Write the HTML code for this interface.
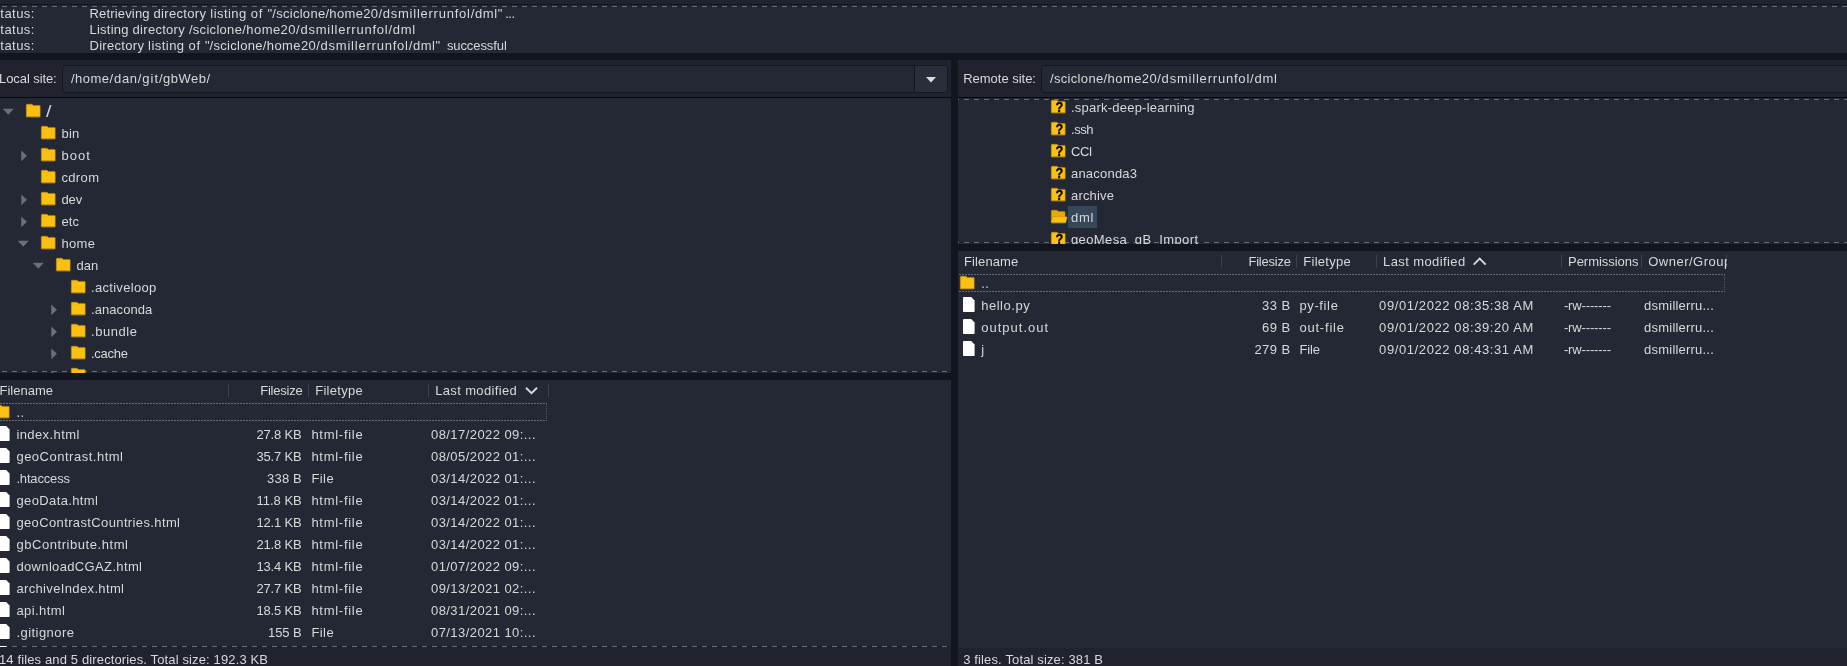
<!DOCTYPE html><html><head><meta charset="utf-8"><title>FileZilla</title><style>
html,body{margin:0;padding:0}
body{width:1847px;height:666px;overflow:hidden;position:relative;background:#242834;font-family:"Liberation Sans", sans-serif;font-size:13px;color:#d8d8d8}
.t{position:absolute;white-space:pre;line-height:22px;height:22px}
.b{position:absolute}
#ic,#tx,#tx2{position:absolute;left:0;top:0;width:1847px;height:666px;will-change:transform}
svg{position:absolute;overflow:visible}

</style></head><body>
<div class="b" style="left:0px;top:0px;width:1847px;height:4px;background:#20232e;"></div>
<div class="b" style="left:0px;top:4px;width:1847px;height:1px;background:#141620;"></div>
<div class="b" style="left:0px;top:60px;width:951px;height:37px;background:#20232e;"></div>
<div class="b" style="left:958px;top:60px;width:889px;height:37px;background:#20232e;"></div>
<div class="b" style="left:0px;top:6px;width:1847px;height:1px;background:#1b1d27"></div>
<svg style="left:0;top:0" width="1847" height="666"><line x1="0" y1="6.5" x2="1847" y2="6.5" stroke="#686c78" stroke-width="1" stroke-dasharray="5 5" stroke-dashoffset="8"/></svg>
<div class="b" style="left:958px;top:99px;width:889px;height:1px;background:#1b1d27"></div>
<svg style="left:0;top:0" width="1847" height="666"><line x1="958" y1="99.5" x2="1847" y2="99.5" stroke="#686c78" stroke-width="1" stroke-dasharray="5 5" stroke-dashoffset="4"/></svg>
<div class="b" style="left:958px;top:242px;width:889px;height:1px;background:#1b1d27"></div>
<svg style="left:0;top:0" width="1847" height="666"><line x1="958" y1="242.5" x2="1847" y2="242.5" stroke="#686c78" stroke-width="1" stroke-dasharray="5 5" stroke-dashoffset="4"/></svg>
<div class="b" style="left:0px;top:371px;width:951px;height:1px;background:#1b1d27"></div>
<svg style="left:0;top:0" width="1847" height="666"><line x1="0" y1="371.5" x2="951" y2="371.5" stroke="#686c78" stroke-width="1" stroke-dasharray="5 5" stroke-dashoffset="8"/></svg>
<div class="b" style="left:0px;top:646px;width:951px;height:1px;background:#1b1d27"></div>
<svg style="left:0;top:0" width="1847" height="666"><line x1="0" y1="646.5" x2="951" y2="646.5" stroke="#686c78" stroke-width="1" stroke-dasharray="5 5" stroke-dashoffset="8"/></svg>
<div class="b" style="left:62px;top:65px;width:886px;height:28px;background:#242734;border:1px solid #141620;border-radius:4px;box-sizing:border-box"></div>
<div class="b" style="left:914px;top:66px;width:33px;height:26px;background:#2a2d3b;border-left:1px solid #141620;border-radius:0 3px 3px 0;box-sizing:border-box"></div>
<svg style="left:0;top:0" width="1847" height="666"><path d="M926 77h10l-5 5.5z" fill="#deddda"/></svg>
<div class="b" style="left:1041px;top:65px;width:830px;height:28px;background:#242734;border:1px solid #141620;border-radius:4px;box-sizing:border-box"></div>
<div id="ic">
<svg style="left:25.55px;top:104.30px" width="15" height="14" viewBox="0 0 15 14"><path d="M0.3 1Q0.3 0.2 1.1 0.2H5.7Q6.3 0.2 6.7 0.8L7.1 1.4H13.5Q14.2 1.4 14.2 2.1V12.4Q14.2 13.1 13.5 13.1H1Q0.3 13.1 0.3 12.4Z" fill="#fcc012" stroke="#b58a10" stroke-width="0.5"/><path d="M0.6 12.9H13.9" stroke="#8a6508" stroke-width="0.6" fill="none"/><path d="M0.8 2.2H6.4" stroke="#e9ae0c" stroke-width="0.6" fill="none"/></svg>
<svg style="left:0;top:0" width="1847" height="666"><path d="M2.75 108.8h11l-5.5 6z" fill="#6b6e7c"/></svg>
<svg style="left:40.55px;top:126.30px" width="15" height="14" viewBox="0 0 15 14"><path d="M0.3 1Q0.3 0.2 1.1 0.2H5.7Q6.3 0.2 6.7 0.8L7.1 1.4H13.5Q14.2 1.4 14.2 2.1V12.4Q14.2 13.1 13.5 13.1H1Q0.3 13.1 0.3 12.4Z" fill="#fcc012" stroke="#b58a10" stroke-width="0.5"/><path d="M0.6 12.9H13.9" stroke="#8a6508" stroke-width="0.6" fill="none"/><path d="M0.8 2.2H6.4" stroke="#e9ae0c" stroke-width="0.6" fill="none"/></svg>
<svg style="left:40.55px;top:148.30px" width="15" height="14" viewBox="0 0 15 14"><path d="M0.3 1Q0.3 0.2 1.1 0.2H5.7Q6.3 0.2 6.7 0.8L7.1 1.4H13.5Q14.2 1.4 14.2 2.1V12.4Q14.2 13.1 13.5 13.1H1Q0.3 13.1 0.3 12.4Z" fill="#fcc012" stroke="#b58a10" stroke-width="0.5"/><path d="M0.6 12.9H13.9" stroke="#8a6508" stroke-width="0.6" fill="none"/><path d="M0.8 2.2H6.4" stroke="#e9ae0c" stroke-width="0.6" fill="none"/></svg>
<svg style="left:0;top:0" width="1847" height="666"><path d="M21.249999999999996 150.4v10.8l5.7 -5.4z" fill="#6b6e7c"/></svg>
<svg style="left:40.55px;top:170.30px" width="15" height="14" viewBox="0 0 15 14"><path d="M0.3 1Q0.3 0.2 1.1 0.2H5.7Q6.3 0.2 6.7 0.8L7.1 1.4H13.5Q14.2 1.4 14.2 2.1V12.4Q14.2 13.1 13.5 13.1H1Q0.3 13.1 0.3 12.4Z" fill="#fcc012" stroke="#b58a10" stroke-width="0.5"/><path d="M0.6 12.9H13.9" stroke="#8a6508" stroke-width="0.6" fill="none"/><path d="M0.8 2.2H6.4" stroke="#e9ae0c" stroke-width="0.6" fill="none"/></svg>
<svg style="left:40.55px;top:192.30px" width="15" height="14" viewBox="0 0 15 14"><path d="M0.3 1Q0.3 0.2 1.1 0.2H5.7Q6.3 0.2 6.7 0.8L7.1 1.4H13.5Q14.2 1.4 14.2 2.1V12.4Q14.2 13.1 13.5 13.1H1Q0.3 13.1 0.3 12.4Z" fill="#fcc012" stroke="#b58a10" stroke-width="0.5"/><path d="M0.6 12.9H13.9" stroke="#8a6508" stroke-width="0.6" fill="none"/><path d="M0.8 2.2H6.4" stroke="#e9ae0c" stroke-width="0.6" fill="none"/></svg>
<svg style="left:0;top:0" width="1847" height="666"><path d="M21.249999999999996 194.4v10.8l5.7 -5.4z" fill="#6b6e7c"/></svg>
<svg style="left:40.55px;top:214.30px" width="15" height="14" viewBox="0 0 15 14"><path d="M0.3 1Q0.3 0.2 1.1 0.2H5.7Q6.3 0.2 6.7 0.8L7.1 1.4H13.5Q14.2 1.4 14.2 2.1V12.4Q14.2 13.1 13.5 13.1H1Q0.3 13.1 0.3 12.4Z" fill="#fcc012" stroke="#b58a10" stroke-width="0.5"/><path d="M0.6 12.9H13.9" stroke="#8a6508" stroke-width="0.6" fill="none"/><path d="M0.8 2.2H6.4" stroke="#e9ae0c" stroke-width="0.6" fill="none"/></svg>
<svg style="left:0;top:0" width="1847" height="666"><path d="M21.249999999999996 216.4v10.8l5.7 -5.4z" fill="#6b6e7c"/></svg>
<svg style="left:40.55px;top:236.30px" width="15" height="14" viewBox="0 0 15 14"><path d="M0.3 1Q0.3 0.2 1.1 0.2H5.7Q6.3 0.2 6.7 0.8L7.1 1.4H13.5Q14.2 1.4 14.2 2.1V12.4Q14.2 13.1 13.5 13.1H1Q0.3 13.1 0.3 12.4Z" fill="#fcc012" stroke="#b58a10" stroke-width="0.5"/><path d="M0.6 12.9H13.9" stroke="#8a6508" stroke-width="0.6" fill="none"/><path d="M0.8 2.2H6.4" stroke="#e9ae0c" stroke-width="0.6" fill="none"/></svg>
<svg style="left:0;top:0" width="1847" height="666"><path d="M17.749999999999996 240.8h11l-5.5 6z" fill="#6b6e7c"/></svg>
<svg style="left:55.55px;top:258.30px" width="15" height="14" viewBox="0 0 15 14"><path d="M0.3 1Q0.3 0.2 1.1 0.2H5.7Q6.3 0.2 6.7 0.8L7.1 1.4H13.5Q14.2 1.4 14.2 2.1V12.4Q14.2 13.1 13.5 13.1H1Q0.3 13.1 0.3 12.4Z" fill="#fcc012" stroke="#b58a10" stroke-width="0.5"/><path d="M0.6 12.9H13.9" stroke="#8a6508" stroke-width="0.6" fill="none"/><path d="M0.8 2.2H6.4" stroke="#e9ae0c" stroke-width="0.6" fill="none"/></svg>
<svg style="left:0;top:0" width="1847" height="666"><path d="M32.75 262.8h11l-5.5 6z" fill="#6b6e7c"/></svg>
<svg style="left:70.55px;top:280.30px" width="15" height="14" viewBox="0 0 15 14"><path d="M0.3 1Q0.3 0.2 1.1 0.2H5.7Q6.3 0.2 6.7 0.8L7.1 1.4H13.5Q14.2 1.4 14.2 2.1V12.4Q14.2 13.1 13.5 13.1H1Q0.3 13.1 0.3 12.4Z" fill="#fcc012" stroke="#b58a10" stroke-width="0.5"/><path d="M0.6 12.9H13.9" stroke="#8a6508" stroke-width="0.6" fill="none"/><path d="M0.8 2.2H6.4" stroke="#e9ae0c" stroke-width="0.6" fill="none"/></svg>
<svg style="left:70.55px;top:302.30px" width="15" height="14" viewBox="0 0 15 14"><path d="M0.3 1Q0.3 0.2 1.1 0.2H5.7Q6.3 0.2 6.7 0.8L7.1 1.4H13.5Q14.2 1.4 14.2 2.1V12.4Q14.2 13.1 13.5 13.1H1Q0.3 13.1 0.3 12.4Z" fill="#fcc012" stroke="#b58a10" stroke-width="0.5"/><path d="M0.6 12.9H13.9" stroke="#8a6508" stroke-width="0.6" fill="none"/><path d="M0.8 2.2H6.4" stroke="#e9ae0c" stroke-width="0.6" fill="none"/></svg>
<svg style="left:0;top:0" width="1847" height="666"><path d="M51.25 304.4v10.8l5.7 -5.4z" fill="#6b6e7c"/></svg>
<svg style="left:70.55px;top:324.30px" width="15" height="14" viewBox="0 0 15 14"><path d="M0.3 1Q0.3 0.2 1.1 0.2H5.7Q6.3 0.2 6.7 0.8L7.1 1.4H13.5Q14.2 1.4 14.2 2.1V12.4Q14.2 13.1 13.5 13.1H1Q0.3 13.1 0.3 12.4Z" fill="#fcc012" stroke="#b58a10" stroke-width="0.5"/><path d="M0.6 12.9H13.9" stroke="#8a6508" stroke-width="0.6" fill="none"/><path d="M0.8 2.2H6.4" stroke="#e9ae0c" stroke-width="0.6" fill="none"/></svg>
<svg style="left:0;top:0" width="1847" height="666"><path d="M51.25 326.4v10.8l5.7 -5.4z" fill="#6b6e7c"/></svg>
<svg style="left:70.55px;top:346.30px" width="15" height="14" viewBox="0 0 15 14"><path d="M0.3 1Q0.3 0.2 1.1 0.2H5.7Q6.3 0.2 6.7 0.8L7.1 1.4H13.5Q14.2 1.4 14.2 2.1V12.4Q14.2 13.1 13.5 13.1H1Q0.3 13.1 0.3 12.4Z" fill="#fcc012" stroke="#b58a10" stroke-width="0.5"/><path d="M0.6 12.9H13.9" stroke="#8a6508" stroke-width="0.6" fill="none"/><path d="M0.8 2.2H6.4" stroke="#e9ae0c" stroke-width="0.6" fill="none"/></svg>
<svg style="left:0;top:0" width="1847" height="666"><path d="M51.25 348.4v10.8l5.7 -5.4z" fill="#6b6e7c"/></svg>
<div class="b" style="left:0;top:0;width:951px;height:373px;overflow:hidden">
<svg style="left:71.10px;top:368.30px" width="15" height="14" viewBox="0 0 15 14"><path d="M0.3 1Q0.3 0.2 1.1 0.2H5.7Q6.3 0.2 6.7 0.8L7.1 1.4H13.5Q14.2 1.4 14.2 2.1V12.4Q14.2 13.1 13.5 13.1H1Q0.3 13.1 0.3 12.4Z" fill="#fcc012" stroke="#b58a10" stroke-width="0.5"/><path d="M0.6 12.9H13.9" stroke="#8a6508" stroke-width="0.6" fill="none"/><path d="M0.8 2.2H6.4" stroke="#e9ae0c" stroke-width="0.6" fill="none"/></svg>
<svg style="left:0;top:0" width="1847" height="666"><path d="M51.3 370.4v10.8l5.7 -5.4z" fill="#6b6e7c"/></svg>
</div>
<svg style="left:1050.70px;top:100.30px" width="15" height="14" viewBox="0 0 15 14"><path d="M0.3 1Q0.3 0.2 1.1 0.2H5.7Q6.3 0.2 6.7 0.8L7.1 1.4H13.5Q14.2 1.4 14.2 2.1V12.4Q14.2 13.1 13.5 13.1H1Q0.3 13.1 0.3 12.4Z" fill="#fcc012" stroke="#b58a10" stroke-width="0.5"/><path d="M0.6 12.9H13.9" stroke="#8a6508" stroke-width="0.6" fill="none"/><text x="8.35" y="12.2" text-anchor="middle" stroke="#080808" stroke-width="0.35" font-family="Liberation Sans, sans-serif" font-weight="bold" font-size="14.2" fill="#080808" transform="translate(8.35 0) scale(0.9 1) translate(-8.35 0)">?</text></svg>
<svg style="left:1050.70px;top:122.30px" width="15" height="14" viewBox="0 0 15 14"><path d="M0.3 1Q0.3 0.2 1.1 0.2H5.7Q6.3 0.2 6.7 0.8L7.1 1.4H13.5Q14.2 1.4 14.2 2.1V12.4Q14.2 13.1 13.5 13.1H1Q0.3 13.1 0.3 12.4Z" fill="#fcc012" stroke="#b58a10" stroke-width="0.5"/><path d="M0.6 12.9H13.9" stroke="#8a6508" stroke-width="0.6" fill="none"/><text x="8.35" y="12.2" text-anchor="middle" stroke="#080808" stroke-width="0.35" font-family="Liberation Sans, sans-serif" font-weight="bold" font-size="14.2" fill="#080808" transform="translate(8.35 0) scale(0.9 1) translate(-8.35 0)">?</text></svg>
<svg style="left:1050.70px;top:144.30px" width="15" height="14" viewBox="0 0 15 14"><path d="M0.3 1Q0.3 0.2 1.1 0.2H5.7Q6.3 0.2 6.7 0.8L7.1 1.4H13.5Q14.2 1.4 14.2 2.1V12.4Q14.2 13.1 13.5 13.1H1Q0.3 13.1 0.3 12.4Z" fill="#fcc012" stroke="#b58a10" stroke-width="0.5"/><path d="M0.6 12.9H13.9" stroke="#8a6508" stroke-width="0.6" fill="none"/><text x="8.35" y="12.2" text-anchor="middle" stroke="#080808" stroke-width="0.35" font-family="Liberation Sans, sans-serif" font-weight="bold" font-size="14.2" fill="#080808" transform="translate(8.35 0) scale(0.9 1) translate(-8.35 0)">?</text></svg>
<svg style="left:1050.70px;top:166.30px" width="15" height="14" viewBox="0 0 15 14"><path d="M0.3 1Q0.3 0.2 1.1 0.2H5.7Q6.3 0.2 6.7 0.8L7.1 1.4H13.5Q14.2 1.4 14.2 2.1V12.4Q14.2 13.1 13.5 13.1H1Q0.3 13.1 0.3 12.4Z" fill="#fcc012" stroke="#b58a10" stroke-width="0.5"/><path d="M0.6 12.9H13.9" stroke="#8a6508" stroke-width="0.6" fill="none"/><text x="8.35" y="12.2" text-anchor="middle" stroke="#080808" stroke-width="0.35" font-family="Liberation Sans, sans-serif" font-weight="bold" font-size="14.2" fill="#080808" transform="translate(8.35 0) scale(0.9 1) translate(-8.35 0)">?</text></svg>
<svg style="left:1050.70px;top:188.30px" width="15" height="14" viewBox="0 0 15 14"><path d="M0.3 1Q0.3 0.2 1.1 0.2H5.7Q6.3 0.2 6.7 0.8L7.1 1.4H13.5Q14.2 1.4 14.2 2.1V12.4Q14.2 13.1 13.5 13.1H1Q0.3 13.1 0.3 12.4Z" fill="#fcc012" stroke="#b58a10" stroke-width="0.5"/><path d="M0.6 12.9H13.9" stroke="#8a6508" stroke-width="0.6" fill="none"/><text x="8.35" y="12.2" text-anchor="middle" stroke="#080808" stroke-width="0.35" font-family="Liberation Sans, sans-serif" font-weight="bold" font-size="14.2" fill="#080808" transform="translate(8.35 0) scale(0.9 1) translate(-8.35 0)">?</text></svg>
<div class="b" style="left:1068px;top:206px;width:29px;height:22px;background:#36475a;"></div>
<svg style="left:1050.70px;top:210.30px" width="17" height="14" viewBox="0 0 17 14"><path d="M0.3 1Q0.3 0.2 1.1 0.2H5.7Q6.3 0.2 6.7 0.8L7.1 1.4H13.3Q14 1.4 14 2.1V12H0.3Z" fill="#e6a80c" stroke="#b58a10" stroke-width="0.5"/><path d="M2.2 6.7H15.6Q16.3 6.7 16.1 7.4L14.9 12.4Q14.7 13.1 14 13.1H1Q0.3 13.1 0.3 12.4V11.5L1.5 7.4Q1.7 6.7 2.4 6.7Z" fill="#fcc012" stroke="#b58a10" stroke-width="0.4"/><path d="M0.6 12.9H14.3" stroke="#8a6508" stroke-width="0.6" fill="none"/></svg>
<svg style="left:1050.70px;top:232.30px" width="15" height="14" viewBox="0 0 15 14"><path d="M0.3 1Q0.3 0.2 1.1 0.2H5.7Q6.3 0.2 6.7 0.8L7.1 1.4H13.5Q14.2 1.4 14.2 2.1V12.4Q14.2 13.1 13.5 13.1H1Q0.3 13.1 0.3 12.4Z" fill="#fcc012" stroke="#b58a10" stroke-width="0.5"/><path d="M0.6 12.9H13.9" stroke="#8a6508" stroke-width="0.6" fill="none"/><text x="8.35" y="12.2" text-anchor="middle" stroke="#080808" stroke-width="0.35" font-family="Liberation Sans, sans-serif" font-weight="bold" font-size="14.2" fill="#080808" transform="translate(8.35 0) scale(0.9 1) translate(-8.35 0)">?</text></svg>
<div class="b" style="left:228px;top:384px;width:1px;height:13px;background:#3d404d;"></div>
<div class="b" style="left:308px;top:384px;width:1px;height:13px;background:#3d404d;"></div>
<div class="b" style="left:428px;top:384px;width:1px;height:13px;background:#3d404d;"></div>
<div class="b" style="left:548px;top:384px;width:1px;height:13px;background:#3d404d;"></div>
<div class="b" style="left:1221px;top:255px;width:1px;height:13px;background:#3d404d;"></div>
<div class="b" style="left:1296px;top:255px;width:1px;height:13px;background:#3d404d;"></div>
<div class="b" style="left:1376px;top:255px;width:1px;height:13px;background:#3d404d;"></div>
<div class="b" style="left:1561px;top:255px;width:1px;height:13px;background:#3d404d;"></div>
<div class="b" style="left:1641px;top:255px;width:1px;height:13px;background:#3d404d;"></div>
<div class="b" style="left:1726px;top:255px;width:1px;height:13px;background:#3d404d;"></div>
<svg style="left:0;top:0" width="1847" height="666"><path d="M526 387.8l5.5 5.3l5.5 -5.3" fill="none" stroke="#d8d8d8" stroke-width="1.9"/><path d="M1473.7 264.6l6 -6l6 6" fill="none" stroke="#d8d8d8" stroke-width="1.9"/></svg>
<svg style="left:-5.30px;top:404.90px" width="15" height="14" viewBox="0 0 15 14"><path d="M0.3 1Q0.3 0.2 1.1 0.2H5.7Q6.3 0.2 6.7 0.8L7.1 1.4H13.5Q14.2 1.4 14.2 2.1V12.4Q14.2 13.1 13.5 13.1H1Q0.3 13.1 0.3 12.4Z" fill="#fcc012" stroke="#b58a10" stroke-width="0.5"/><path d="M0.6 12.9H13.9" stroke="#8a6508" stroke-width="0.6" fill="none"/><path d="M0.8 2.2H6.4" stroke="#e9ae0c" stroke-width="0.6" fill="none"/></svg>
<svg style="left:-2.3px;top:425.8px" width="12" height="15" viewBox="0 0 12 15"><path d="M0.8 0H8.2L11.6 3.4V14.3Q11.6 15.1 10.8 15.1H0.8Q0 15.1 0 14.3V0.8Q0 0 0.8 0Z" fill="#ffffff"/></svg>
<svg style="left:-2.3px;top:447.8px" width="12" height="15" viewBox="0 0 12 15"><path d="M0.8 0H8.2L11.6 3.4V14.3Q11.6 15.1 10.8 15.1H0.8Q0 15.1 0 14.3V0.8Q0 0 0.8 0Z" fill="#ffffff"/></svg>
<svg style="left:-2.3px;top:469.8px" width="12" height="15" viewBox="0 0 12 15"><path d="M0.8 0H8.2L11.6 3.4V14.3Q11.6 15.1 10.8 15.1H0.8Q0 15.1 0 14.3V0.8Q0 0 0.8 0Z" fill="#ffffff"/></svg>
<svg style="left:-2.3px;top:491.8px" width="12" height="15" viewBox="0 0 12 15"><path d="M0.8 0H8.2L11.6 3.4V14.3Q11.6 15.1 10.8 15.1H0.8Q0 15.1 0 14.3V0.8Q0 0 0.8 0Z" fill="#ffffff"/></svg>
<svg style="left:-2.3px;top:513.8px" width="12" height="15" viewBox="0 0 12 15"><path d="M0.8 0H8.2L11.6 3.4V14.3Q11.6 15.1 10.8 15.1H0.8Q0 15.1 0 14.3V0.8Q0 0 0.8 0Z" fill="#ffffff"/></svg>
<svg style="left:-2.3px;top:535.8px" width="12" height="15" viewBox="0 0 12 15"><path d="M0.8 0H8.2L11.6 3.4V14.3Q11.6 15.1 10.8 15.1H0.8Q0 15.1 0 14.3V0.8Q0 0 0.8 0Z" fill="#ffffff"/></svg>
<svg style="left:-2.3px;top:557.8px" width="12" height="15" viewBox="0 0 12 15"><path d="M0.8 0H8.2L11.6 3.4V14.3Q11.6 15.1 10.8 15.1H0.8Q0 15.1 0 14.3V0.8Q0 0 0.8 0Z" fill="#ffffff"/></svg>
<svg style="left:-2.3px;top:579.8px" width="12" height="15" viewBox="0 0 12 15"><path d="M0.8 0H8.2L11.6 3.4V14.3Q11.6 15.1 10.8 15.1H0.8Q0 15.1 0 14.3V0.8Q0 0 0.8 0Z" fill="#ffffff"/></svg>
<svg style="left:-2.3px;top:601.8px" width="12" height="15" viewBox="0 0 12 15"><path d="M0.8 0H8.2L11.6 3.4V14.3Q11.6 15.1 10.8 15.1H0.8Q0 15.1 0 14.3V0.8Q0 0 0.8 0Z" fill="#ffffff"/></svg>
<svg style="left:-2.3px;top:623.8px" width="12" height="15" viewBox="0 0 12 15"><path d="M0.8 0H8.2L11.6 3.4V14.3Q11.6 15.1 10.8 15.1H0.8Q0 15.1 0 14.3V0.8Q0 0 0.8 0Z" fill="#ffffff"/></svg>
<svg style="left:-2.3px;top:645.7px" width="12" height="15" viewBox="0 0 12 15"><path d="M0.8 0H8.2L11.6 3.4V14.3Q11.6 15.1 10.8 15.1H0.8Q0 15.1 0 14.3V0.8Q0 0 0.8 0Z" fill="#ffffff"/></svg>
<svg style="left:0;top:0" width="1847" height="666"><path d="M-3 403.5H547M-3 420.5H547" fill="none" stroke="#666a76" stroke-width="1" stroke-dasharray="2 1"/><path d="M546.5 404V420" fill="none" stroke="#555966" stroke-width="1" stroke-dasharray="1 1"/></svg>
<svg style="left:0;top:0" width="1847" height="666"><path d="M959 274.5H1725M959 291.5H1725" fill="none" stroke="#666a76" stroke-width="1" stroke-dasharray="2 1"/><path d="M1724.5 275V291" fill="none" stroke="#555966" stroke-width="1" stroke-dasharray="1 1"/></svg>
<svg style="left:959.80px;top:275.90px" width="15" height="14" viewBox="0 0 15 14"><path d="M0.3 1Q0.3 0.2 1.1 0.2H5.7Q6.3 0.2 6.7 0.8L7.1 1.4H13.5Q14.2 1.4 14.2 2.1V12.4Q14.2 13.1 13.5 13.1H1Q0.3 13.1 0.3 12.4Z" fill="#fcc012" stroke="#b58a10" stroke-width="0.5"/><path d="M0.6 12.9H13.9" stroke="#8a6508" stroke-width="0.6" fill="none"/><path d="M0.8 2.2H6.4" stroke="#e9ae0c" stroke-width="0.6" fill="none"/></svg>
<svg style="left:962.5px;top:296.8px" width="12" height="15" viewBox="0 0 12 15"><path d="M0.8 0H8.2L11.6 3.4V14.3Q11.6 15.1 10.8 15.1H0.8Q0 15.1 0 14.3V0.8Q0 0 0.8 0Z" fill="#ffffff"/></svg>
<svg style="left:962.5px;top:318.8px" width="12" height="15" viewBox="0 0 12 15"><path d="M0.8 0H8.2L11.6 3.4V14.3Q11.6 15.1 10.8 15.1H0.8Q0 15.1 0 14.3V0.8Q0 0 0.8 0Z" fill="#ffffff"/></svg>
<svg style="left:962.5px;top:340.8px" width="12" height="15" viewBox="0 0 12 15"><path d="M0.8 0H8.2L11.6 3.4V14.3Q11.6 15.1 10.8 15.1H0.8Q0 15.1 0 14.3V0.8Q0 0 0.8 0Z" fill="#ffffff"/></svg>
</div>
<div id="tx">
<span class="t" style="left:45.6px;top:101.4px;font-size:17px;transform:scaleX(1.15);transform-origin:0 0;letter-spacing:0">/</span>
<span class="t" style="left:1648.2px;top:250.60px;width:78.5px;overflow:hidden;letter-spacing:0.5px">Owner/Group</span>
<span class="t" style="left:-8.77px;top:3.20px;letter-spacing:0.450px">Status:</span>
<span class="t" style="left:-8.77px;top:19.00px;letter-spacing:0.450px">Status:</span>
<span class="t" style="left:-8.77px;top:34.80px;letter-spacing:0.450px">Status:</span>
<span class="t" style="left:89.50px;top:3.20px;letter-spacing:0.169px">Retrieving </span>
<span class="t" style="left:153.50px;top:3.20px;letter-spacing:0.333px">directory </span>
<span class="t" style="left:210.30px;top:3.20px;letter-spacing:0.455px">listing </span>
<span class="t" style="left:250.80px;top:3.20px;letter-spacing:0.744px">of </span>
<span class="t" style="left:267.50px;top:3.20px;letter-spacing:0.175px">&quot;</span>
<span class="t" style="left:272.30px;top:3.20px;letter-spacing:0.280px">/sciclone</span>
<span class="t" style="left:325.40px;top:3.20px;letter-spacing:0.344px">/home20</span>
<span class="t" style="left:378.40px;top:3.20px;letter-spacing:0.759px">/dsmillerrunfol</span>
<span class="t" style="left:470.70px;top:3.20px;letter-spacing:0.609px">/dml</span>
<span class="t" style="left:497.70px;top:3.20px;letter-spacing:2.875px">&quot;</span>
<span class="t" style="left:505.20px;top:3.20px;letter-spacing:-0.500px">...</span>
<span class="t" style="left:89.50px;top:19.00px;letter-spacing:0.237px">Listing </span>
<span class="t" style="left:132.60px;top:19.00px;letter-spacing:0.283px">directory </span>
<span class="t" style="left:188.90px;top:19.00px;letter-spacing:0.302px">/sciclone</span>
<span class="t" style="left:242.20px;top:19.00px;letter-spacing:0.458px">/home20</span>
<span class="t" style="left:296.00px;top:19.00px;letter-spacing:0.772px">/dsmillerrunfol</span>
<span class="t" style="left:388.50px;top:19.00px;letter-spacing:0.679px">/dml</span>
<span class="t" style="left:89.50px;top:34.80px;letter-spacing:0.297px">Directory </span>
<span class="t" style="left:148.10px;top:34.80px;letter-spacing:0.455px">listing </span>
<span class="t" style="left:188.60px;top:34.80px;letter-spacing:0.644px">of </span>
<span class="t" style="left:205.00px;top:34.80px;letter-spacing:-0.125px">&quot;</span>
<span class="t" style="left:209.50px;top:34.80px;letter-spacing:0.302px">/sciclone</span>
<span class="t" style="left:262.80px;top:34.80px;letter-spacing:0.401px">/home20</span>
<span class="t" style="left:316.20px;top:34.80px;letter-spacing:0.772px">/dsmillerrunfol</span>
<span class="t" style="left:408.70px;top:34.80px;letter-spacing:0.584px">/dml</span>
<span class="t" style="left:435.60px;top:34.80px;letter-spacing:1.533px">&quot; </span>
<span class="t" style="left:446.90px;top:34.80px;letter-spacing:-0.089px">successful</span>
<span class="t" style="left:-1.00px;top:68.00px;letter-spacing:-0.067px">Local </span>
<span class="t" style="left:33.30px;top:68.00px;letter-spacing:-0.136px">site:</span>
<span class="t" style="left:70.90px;top:68.00px;letter-spacing:0.512px">/home</span>
<span class="t" style="left:109.60px;top:68.00px;letter-spacing:0.722px">/dan</span>
<span class="t" style="left:137.80px;top:68.00px;letter-spacing:0.964px">/git</span>
<span class="t" style="left:159.00px;top:68.00px;letter-spacing:0.470px">/gbWeb</span>
<span class="t" style="left:206.40px;top:68.00px;letter-spacing:0.450px">/</span>
<span class="t" style="left:963.20px;top:68.00px;letter-spacing:-0.017px">Remote site:</span>
<span class="t" style="left:1050.00px;top:68.00px;letter-spacing:0.325px">/sciclone</span>
<span class="t" style="left:1103.50px;top:68.00px;letter-spacing:0.444px">/home20</span>
<span class="t" style="left:1157.20px;top:68.00px;letter-spacing:0.799px">/dsmillerrunfol</span>
<span class="t" style="left:1250.10px;top:68.00px;letter-spacing:0.779px">/dml</span>
<span class="t" style="left:61.40px;top:122.50px;letter-spacing:0.270px">bin</span>
<span class="t" style="left:61.40px;top:144.50px;letter-spacing:1.029px">boot</span>
<span class="t" style="left:61.40px;top:166.50px;letter-spacing:0.369px">cdrom</span>
<span class="t" style="left:61.40px;top:188.50px;letter-spacing:-0.034px">dev</span>
<span class="t" style="left:61.40px;top:210.50px;letter-spacing:0.128px">etc</span>
<span class="t" style="left:61.40px;top:232.50px;letter-spacing:0.356px">home</span>
<span class="t" style="left:76.40px;top:254.50px;letter-spacing:0.048px">dan</span>
<span class="t" style="left:91.00px;top:276.50px;letter-spacing:0.304px">.activeloop</span>
<span class="t" style="left:91.00px;top:298.50px;letter-spacing:0.071px">.anaconda</span>
<span class="t" style="left:91.00px;top:320.50px;letter-spacing:0.557px">.bundle</span>
<span class="t" style="left:91.00px;top:342.50px;letter-spacing:-0.263px">.cache</span>
<span class="t" style="left:1071.00px;top:96.50px;letter-spacing:0.225px">.spark-deep-learning</span>
<span class="t" style="left:1071.00px;top:118.50px;letter-spacing:-0.448px">.ssh</span>
<span class="t" style="left:1071.00px;top:140.50px;letter-spacing:-0.500px">CCI</span>
<span class="t" style="left:1071.00px;top:162.50px;letter-spacing:0.207px">anaconda3</span>
<span class="t" style="left:1071.00px;top:184.50px;letter-spacing:0.180px">archive</span>
<span class="t" style="left:1071.00px;top:206.50px;letter-spacing:0.773px">dml</span>
<span class="t" style="left:1071.00px;top:228.50px;letter-spacing:0.395px">geoMesa_gB_Import</span>
<span class="t" style="left:-0.50px;top:379.90px;letter-spacing:0.004px">Filename</span>
<span class="t" style="left:260.20px;top:379.90px;letter-spacing:-0.225px">Filesize</span>
<span class="t" style="left:315.20px;top:379.90px;letter-spacing:0.281px">Filetype</span>
<span class="t" style="left:435.20px;top:379.90px;letter-spacing:0.356px">Last modified</span>
<span class="t" style="left:16.40px;top:401.50px;letter-spacing:0.450px">..</span>
<span class="t" style="left:16.40px;top:423.50px;letter-spacing:0.406px">index.html</span>
<span class="t" style="left:256.40px;top:423.50px;letter-spacing:-0.144px">27.8 KB</span>
<span class="t" style="left:311.40px;top:423.50px;letter-spacing:0.723px">html-file</span>
<span class="t" style="left:431.00px;top:423.50px;letter-spacing:0.432px">08/17/2022 09:...</span>
<span class="t" style="left:16.40px;top:445.50px;letter-spacing:0.507px">geoContrast.html</span>
<span class="t" style="left:256.40px;top:445.50px;letter-spacing:-0.144px">35.7 KB</span>
<span class="t" style="left:311.40px;top:445.50px;letter-spacing:0.723px">html-file</span>
<span class="t" style="left:431.00px;top:445.50px;letter-spacing:0.432px">08/05/2022 01:...</span>
<span class="t" style="left:16.40px;top:467.50px;letter-spacing:-0.165px">.htaccess</span>
<span class="t" style="left:267.10px;top:467.50px;letter-spacing:0.179px">338 B</span>
<span class="t" style="left:311.40px;top:467.50px;letter-spacing:0.450px">File</span>
<span class="t" style="left:431.00px;top:467.50px;letter-spacing:0.432px">03/14/2022 01:...</span>
<span class="t" style="left:16.40px;top:489.50px;letter-spacing:0.388px">geoData.html</span>
<span class="t" style="left:256.40px;top:489.50px;letter-spacing:0.017px">11.8 KB</span>
<span class="t" style="left:311.40px;top:489.50px;letter-spacing:0.723px">html-file</span>
<span class="t" style="left:431.00px;top:489.50px;letter-spacing:0.432px">03/14/2022 01:...</span>
<span class="t" style="left:16.40px;top:511.50px;letter-spacing:0.373px">geoContrastCountries.html</span>
<span class="t" style="left:256.40px;top:511.50px;letter-spacing:-0.144px">12.1 KB</span>
<span class="t" style="left:311.40px;top:511.50px;letter-spacing:0.723px">html-file</span>
<span class="t" style="left:431.00px;top:511.50px;letter-spacing:0.432px">03/14/2022 01:...</span>
<span class="t" style="left:16.40px;top:533.50px;letter-spacing:0.561px">gbContribute.html</span>
<span class="t" style="left:256.40px;top:533.50px;letter-spacing:-0.144px">21.8 KB</span>
<span class="t" style="left:311.40px;top:533.50px;letter-spacing:0.723px">html-file</span>
<span class="t" style="left:431.00px;top:533.50px;letter-spacing:0.432px">03/14/2022 01:...</span>
<span class="t" style="left:16.40px;top:555.50px;letter-spacing:0.353px">downloadCGAZ.html</span>
<span class="t" style="left:256.40px;top:555.50px;letter-spacing:-0.144px">13.4 KB</span>
<span class="t" style="left:311.40px;top:555.50px;letter-spacing:0.723px">html-file</span>
<span class="t" style="left:431.00px;top:555.50px;letter-spacing:0.432px">01/07/2022 09:...</span>
<span class="t" style="left:16.40px;top:577.50px;letter-spacing:0.357px">archiveIndex.html</span>
<span class="t" style="left:256.40px;top:577.50px;letter-spacing:-0.144px">27.7 KB</span>
<span class="t" style="left:311.40px;top:577.50px;letter-spacing:0.723px">html-file</span>
<span class="t" style="left:431.00px;top:577.50px;letter-spacing:0.432px">09/13/2021 02:...</span>
<span class="t" style="left:16.40px;top:599.50px;letter-spacing:0.438px">api.html</span>
<span class="t" style="left:256.40px;top:599.50px;letter-spacing:-0.144px">18.5 KB</span>
<span class="t" style="left:311.40px;top:599.50px;letter-spacing:0.723px">html-file</span>
<span class="t" style="left:431.00px;top:599.50px;letter-spacing:0.432px">08/31/2021 09:...</span>
<span class="t" style="left:16.40px;top:621.50px;letter-spacing:0.457px">.gitignore</span>
<span class="t" style="left:268.00px;top:621.50px;letter-spacing:-0.046px">155 B</span>
<span class="t" style="left:311.40px;top:621.50px;letter-spacing:0.450px">File</span>
<span class="t" style="left:431.00px;top:621.50px;letter-spacing:0.432px">07/13/2021 10:...</span>
<span class="t" style="left:964.10px;top:250.60px;letter-spacing:0.090px">Filename</span>
<span class="t" style="left:1248.50px;top:250.60px;letter-spacing:-0.240px">Filesize</span>
<span class="t" style="left:1303.30px;top:250.60px;letter-spacing:0.281px">Filetype</span>
<span class="t" style="left:1383.10px;top:250.60px;letter-spacing:0.398px">Last modified</span>
<span class="t" style="left:1568.00px;top:250.60px;letter-spacing:-0.030px">Permissions</span>
<span class="t" style="left:981.20px;top:272.50px;letter-spacing:0.450px">..</span>
<span class="t" style="left:981.20px;top:294.50px;letter-spacing:0.527px">hello.py</span>
<span class="t" style="left:1262.10px;top:294.50px;letter-spacing:0.450px">33 B</span>
<span class="t" style="left:1299.40px;top:294.50px;letter-spacing:0.635px">py-file</span>
<span class="t" style="left:1379.10px;top:294.50px;letter-spacing:0.596px">09/01/2022 08:35:38 AM</span>
<span class="t" style="left:1563.90px;top:294.50px;letter-spacing:-0.140px">-rw-------</span>
<span class="t" style="left:1644.10px;top:294.50px;letter-spacing:0.209px">dsmillerru...</span>
<span class="t" style="left:981.20px;top:316.50px;letter-spacing:1.019px">output.out</span>
<span class="t" style="left:1262.10px;top:316.50px;letter-spacing:0.450px">69 B</span>
<span class="t" style="left:1299.40px;top:316.50px;letter-spacing:0.796px">out-file</span>
<span class="t" style="left:1379.10px;top:316.50px;letter-spacing:0.596px">09/01/2022 08:39:20 AM</span>
<span class="t" style="left:1563.90px;top:316.50px;letter-spacing:-0.140px">-rw-------</span>
<span class="t" style="left:1644.10px;top:316.50px;letter-spacing:0.209px">dsmillerru...</span>
<span class="t" style="left:981.20px;top:338.50px;letter-spacing:0.450px">j</span>
<span class="t" style="left:1254.42px;top:338.50px;letter-spacing:0.450px">279 B</span>
<span class="t" style="left:1299.40px;top:338.50px;letter-spacing:-0.084px">File</span>
<span class="t" style="left:1379.10px;top:338.50px;letter-spacing:0.596px">09/01/2022 08:43:31 AM</span>
<span class="t" style="left:1563.90px;top:338.50px;letter-spacing:-0.140px">-rw-------</span>
<span class="t" style="left:1644.10px;top:338.50px;letter-spacing:0.209px">dsmillerru...</span>
</div>
<div class="b" style="left:0px;top:53px;width:1847px;height:7px;background:#13151e;"></div>
<div class="b" style="left:951px;top:60px;width:7px;height:606px;background:#13151e;"></div>
<div class="b" style="left:0px;top:97px;width:951px;height:1px;background:#07080c;"></div>
<div class="b" style="left:958px;top:97px;width:889px;height:1px;background:#07080c;"></div>
<div class="b" style="left:0px;top:373px;width:951px;height:7px;background:#13151e;"></div>
<div class="b" style="left:958px;top:244px;width:889px;height:7px;background:#13151e;"></div>
<div class="b" style="left:0px;top:647px;width:951px;height:19px;background:#20232e;"></div>
<div class="b" style="left:958px;top:648px;width:889px;height:18px;background:#20232e;"></div>
<div id="tx2">
<span class="t" style="left:-1.00px;top:648.60px;letter-spacing:0.132px">14 files and 5 directories. Total size: 192.3 KB</span>
<span class="t" style="left:963.20px;top:648.60px;letter-spacing:0.138px">3 files. Total size: 381 B</span>
</div>
</body></html>
